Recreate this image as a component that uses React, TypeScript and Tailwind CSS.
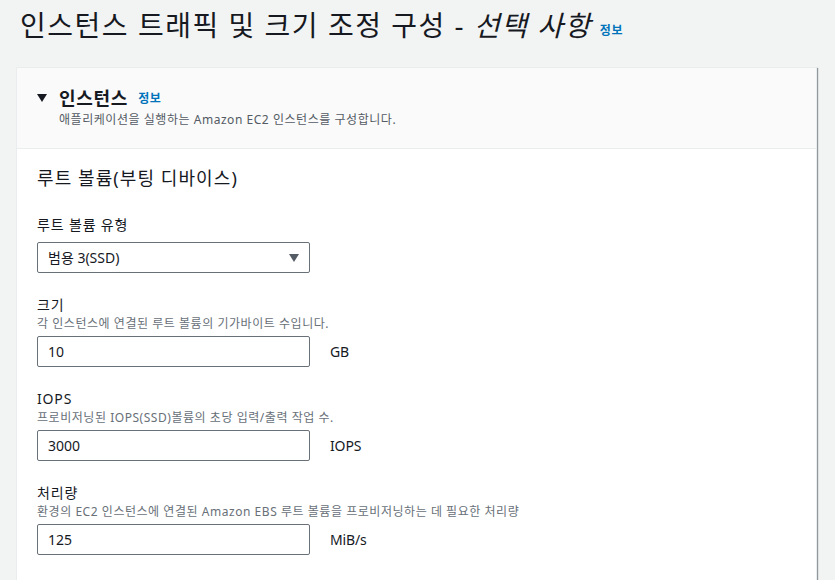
import React from "react";

const font = { fontFamily: '"Noto Sans", "Noto Sans CJK KR", sans-serif' };

function Field({
  label,
  desc,
  value,
  unit,
}: {
  label: string;
  desc: string;
  value: string;
  unit: string;
}) {
  return (
    <div className="mt-[22px]">
      <div className="text-[14px] leading-[20px] tracking-[0.06em] text-[#16191f]">{label}</div>
      <div className="mt-[1px] text-[12px] leading-[16px] tracking-[0.045em] text-[#687078]">{desc}</div>
      <div className="mt-[4px] flex items-center">
        <div className="flex h-[31px] w-[273px] items-center rounded-[2px] border border-[#687078] bg-white px-[10px] text-[14px] text-[#16191f]">
          {value}
        </div>
        <div className="ml-[20px] text-[14px] tracking-[-0.01em] text-[#16191f]">{unit}</div>
      </div>
    </div>
  );
}

export default function App() {
  return (
    <div className="min-h-screen bg-[#f2f3f3] pl-4 pr-[18px]" style={font}>
      <div className="flex h-[67px] items-start pl-1 pt-[5px]">
        <h1 className="text-[28px] font-normal leading-[40px] tracking-[0.054em] text-[#16191f]">
          인스턴스 트래픽 및 크기 조정 구성 - <i>선택 사항</i>
        </h1>
        <a className="ml-[8px] mt-[17px] text-[12px] font-bold leading-[18px] tracking-[0.05em] text-[#0073bb]">
          정보
        </a>
      </div>
      <div className="border border-[#eaeded] bg-white shadow-[1px_1px_1px_0_rgba(0,28,36,0.3),1px_1px_1px_0_rgba(0,28,36,0.15)]">
        <div className="h-[81px] border-b border-[#eaeded] bg-[#fafafa] pl-[20px] pt-[18px]">
          <div className="flex items-center">
            <svg width="10" height="8" viewBox="0 0 10 8" className="mr-[12px]">
              <path d="M0 0 L10 0 L5 8 Z" fill="#16191f" />
            </svg>
            <span className="text-[18px] font-bold leading-[24px] tracking-[0.04em] text-[#16191f]">인스턴스</span>
            <a className="ml-[10px] mt-[2px] text-[12px] font-bold tracking-[0.05em] text-[#0073bb]">정보</a>
          </div>
          <div className="ml-[22px] mt-[2px] text-[12px] leading-[16px] tracking-[0.045em] text-[#545b64]">
            애플리케이션을 실행하는 Amazon EC2 인스턴스를 구성합니다.
          </div>
        </div>
        <div className="pb-[30px] pl-[20px] pt-[16px]">
          <div className="text-[18px] leading-[26px] tracking-[0.06em] text-[#16191f]">루트 볼륨(부팅 디바이스)</div>
          <div className="mt-[24px] text-[14px] leading-[20px] tracking-[0.06em] text-[#16191f]">루트 볼륨 유형</div>
          <div className="mt-[7px] flex h-[31px] w-[273px] items-center justify-between rounded-[2px] border border-[#687078] bg-white pl-[10px] pr-[10px] text-[14px] text-[#16191f]">
            <span>범용 3(SSD)</span>
            <svg width="10" height="8" viewBox="0 0 10 8">
              <path d="M0 0 L10 0 L5 8 Z" fill="#545b64" />
            </svg>
          </div>
          <Field label="크기" desc="각 인스턴스에 연결된 루트 볼륨의 기가바이트 수입니다." value="10" unit="GB" />
          <Field
            label="IOPS"
            desc="프로비저닝된 IOPS(SSD)볼륨의 초당 입력/출력 작업 수."
            value="3000"
            unit="IOPS"
          />
          <Field
            label="처리량"
            desc="환경의 EC2 인스턴스에 연결된 Amazon EBS 루트 볼륨을 프로비저닝하는 데 필요한 처리량"
            value="125"
            unit="MiB/s"
          />
        </div>
      </div>
    </div>
  );
}
